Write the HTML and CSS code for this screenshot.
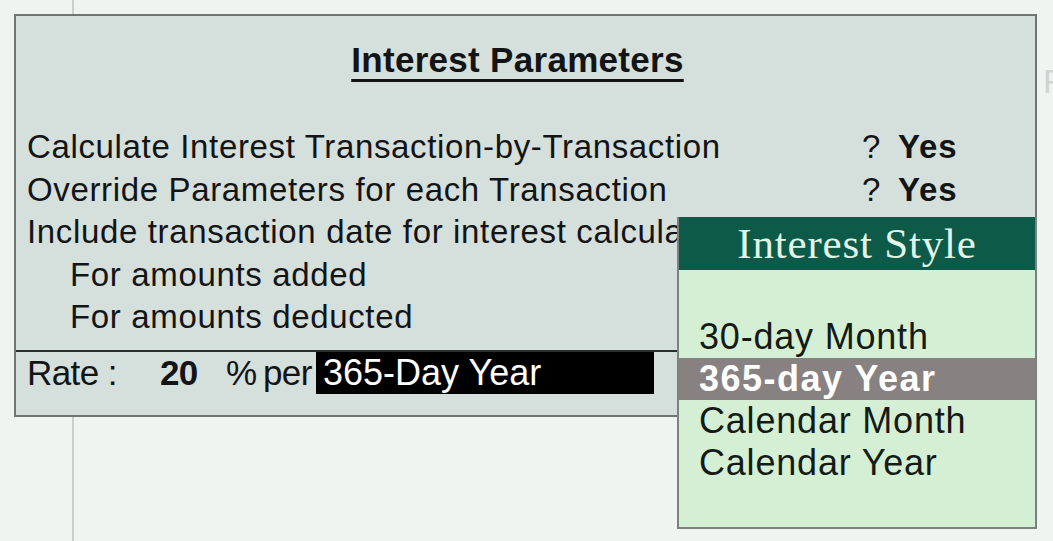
FILE: index.html
```html
<!DOCTYPE html>
<html>
<head>
<meta charset="utf-8">
<link rel="stylesheet" href="styles.css">
</head>
<body>
<div class="page">
  <div class="panel">
    <div class="title"><span>Interest Parameters</span></div>
    <div class="rows">
      <div class="row"><span class="label">Calculate Interest Transaction-by-Transaction</span><span class="q">?</span><span class="val">Yes</span></div>
      <div class="row"><span class="label">Override Parameters for each Transaction</span><span class="q">?</span><span class="val">Yes</span></div>
      <div class="row"><span class="label">Include transaction date for interest calculation</span></div>
      <div class="row indent"><span class="label">For amounts added</span></div>
      <div class="row indent"><span class="label">For amounts deducted</span></div>
    </div>
    <div class="rate">
      <span class="rate-label">Rate :</span>
      <span class="rate-num">20</span>
      <span class="rate-pct">%</span>
      <span class="rate-per">per</span>
      <span class="rate-box">365-Day Year</span>
    </div>
    <div class="popup">
      <div class="popup-head">Interest Style</div>
      <div class="popup-body">
        <div class="item">30-day Month</div>
        <div class="item sel">365-day Year</div>
        <div class="item">Calendar Month</div>
        <div class="item">Calendar Year</div>
      </div>
    </div>
  </div>
  <div class="side">F</div>
</div>
</body>
</html>
```

FILE: styles.css
```css
html, body {
  margin: 0;
  padding: 0;
}
body {
  width: 1053px;
  height: 541px;
  overflow: hidden;
  background-color: #eef5f1;
  background-image: linear-gradient(to right, transparent 72px, #c9cfcc 72px, #c9cfcc 74px, transparent 74px);
  font-family: "Liberation Sans", Arial, sans-serif;
  color: #121416;
}
.page {
  display: flex;
  align-items: flex-start;
  padding: 14px 0 0 14px;
}
.panel {
  position: relative;
  width: 1023px;
  height: 403px;
  box-sizing: border-box;
  border: 2px solid #6f7573;
  background: #d5dfdb;
  flex: none;
}
.title {
  padding: 24px 16px 0 0;
  height: 46px;
  text-align: center;
  font-weight: bold;
  font-size: 35px;
  line-height: 40px;
  letter-spacing: 0.3px;
}
.title span {
  text-decoration: underline;
  text-decoration-thickness: 3px;
  text-underline-offset: 7px;
}
.rows {
  margin-top: 40px;
  padding-left: 11px;
}
.row {
  display: flex;
  height: 42.5px;
  align-items: center;
  font-size: 33px;
  letter-spacing: 0.65px;
  white-space: nowrap;
}
.row .label {
  width: 835px;
  overflow: hidden;
}
.row.indent {
  padding-left: 43px;
}
.q {
  width: 36px;
}
.val {
  font-weight: bold;
  letter-spacing: 0.8px;
}
.rate {
  margin-top: 11px;
  border-top: 2px solid #2a2d2d;
  display: flex;
  align-items: center;
  height: 42px;
  padding-left: 11px;
  font-size: 35px;
  letter-spacing: -0.6px;
  white-space: nowrap;
}
.rate-label {
  width: 133px;
}
.rate-num {
  font-weight: bold;
  width: 66px;
}
.rate-pct {
  width: 37px;
}
.rate-per {
  width: 53px;
}
.rate-box {
  align-self: stretch;
  width: 338px;
  box-sizing: border-box;
  padding-left: 7px;
  background: #000;
  color: #fff;
  display: flex;
  align-items: center;
  font-size: 36px;
  letter-spacing: 0;
}
.popup {
  position: absolute;
  left: 661px;
  top: 201px;
  width: 360px;
  height: 312px;
  box-sizing: border-box;
  border: 2px solid #7b817e;
  border-top: none;
  background: #d4efd4;
}
.popup-head {
  height: 53px;
  background: #0e5a48;
  color: #e2f6e8;
  font-family: "Liberation Serif", "Times New Roman", serif;
  font-size: 43px;
  line-height: 53px;
  text-align: center;
  letter-spacing: 0.8px;
}
.popup-body {
  padding-top: 46px;
}
.item {
  height: 42px;
  line-height: 42px;
  padding-left: 20px;
  font-size: 36px;
  letter-spacing: 0.8px;
  color: #141a16;
  white-space: nowrap;
}
.item.sel {
  background: #878281;
  color: #fff;
  font-weight: bold;
  letter-spacing: 1.5px;
}
.side {
  margin: 48px 0 0 6px;
  font-size: 34px;
  color: #cdd4d1;
  white-space: nowrap;
}
```
